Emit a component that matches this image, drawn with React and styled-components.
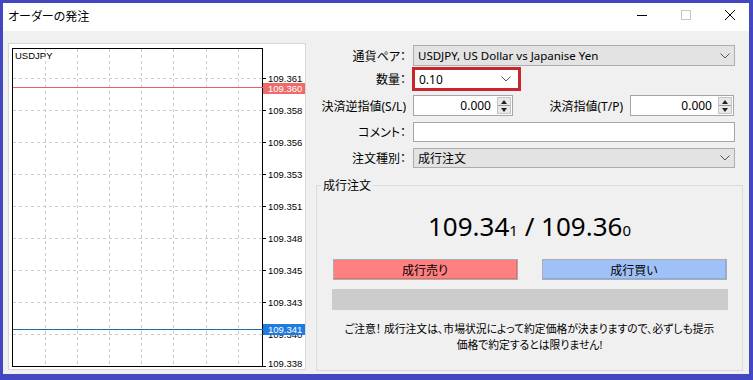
import React from "react";
import styled, { createGlobalStyle } from "styled-components";

const FONT = `"Noto Sans", "Noto Sans CJK JP", sans-serif`;

const GlobalStyle = createGlobalStyle`
  body {
    margin: 0;
    font-family: ${FONT};
    font-size: 12px;
    color: #000;
  }
`;

/* ウィンドウ */
const Window = styled.div`
  width: 753px;
  height: 380px;
  box-sizing: border-box;
  border-style: solid;
  border-color: #4348c2;
  border-width: 3px 4px 6px 3px;
  display: flex;
  flex-direction: column;
  background: #f0f0f0;
  overflow: hidden;
`;

const TitleBar = styled.div`
  height: 28px;
  flex-shrink: 0;
  background: #fff;
  display: flex;
  align-items: center;
  padding-left: 5px;
`;

const Title = styled.div`
  font-size: 12px;
  font-feature-settings: "palt";
  margin-top: -2px;
`;

const Controls = styled.div`
  margin-left: auto;
  margin-right: 14px;
  display: flex;
  align-items: center;
  gap: 34px;
  margin-top: -4px;
`;

const Body = styled.div`
  flex: 1;
  display: flex;
  padding: 12px 0 0 5px;
`;

const ChartPanel = styled.div`
  width: 298px;
  height: 327px;
  flex-shrink: 0;
  box-sizing: border-box;
  background: #fff;
  border: 1px solid #d6d6d6;
`;

const Form = styled.div`
  flex: 1;
  display: flex;
  flex-direction: column;
  padding: 0 6px 0 10px;
  font-feature-settings: "palt";
`;

const FieldRow = styled.div`
  display: grid;
  grid-template-columns: 90px 1fr;
  column-gap: 7px;
  height: ${(p) => p.$h}px;
  margin-top: ${(p) => p.$mt}px;
  margin-right: 8px;
`;

const SpinRow = styled.div`
  display: grid;
  grid-template-columns: 90px 100px 1fr 104px;
  column-gap: 7px;
  height: 21px;
  margin-top: 4px;
  margin-right: 9px;
`;

const Label = styled.div`
  display: flex;
  align-items: center;
  justify-content: flex-end;
  white-space: nowrap;
`;

const Select = styled.div`
  display: flex;
  align-items: center;
  box-sizing: border-box;
  background: #e3e3e3;
  border: 1px solid #adadad;
  padding: 0 4px 0 4px;
  font-size: ${(p) => p.$fs || 12}px;
  svg {
    margin-left: auto;
  }
`;

const QtySelect = styled.div`
  display: flex;
  align-items: center;
  box-sizing: border-box;
  width: 109px;
  margin-left: -1px;
  background: #fff;
  border: 3px solid #c9252d;
  padding: 0 7px 0 4px;
  svg {
    margin-left: auto;
  }
`;

const TextBox = styled.div`
  box-sizing: border-box;
  background: #fff;
  border: 1px solid #a5a5a5;
`;

const SpinBox = styled.div`
  display: flex;
  box-sizing: border-box;
  background: #fff;
  border: 1px solid #a5a5a5;
`;

const SpinValue = styled.div`
  flex: 1;
  display: flex;
  align-items: center;
  justify-content: flex-end;
  padding-right: 6px;
`;

const Spinner = styled.div`
  width: 12px;
  margin: 1px 1px 1px 0;
  display: flex;
  flex-direction: column;
  background: #e8e8e8;
  border: 1px solid #c4c4c4;
`;

const SpinHalf = styled.div`
  flex: 1;
  display: flex;
  align-items: center;
  justify-content: center;
  & + & {
    border-top: 1px solid #9a9a9a;
  }
`;

const GroupBox = styled.div`
  position: relative;
  margin-top: 17px;
  height: 186px;
  box-sizing: border-box;
  border: 1px solid #dcdcdc;
  display: flex;
  flex-direction: column;
  align-items: center;
`;

const Legend = styled.div`
  position: absolute;
  top: -9px;
  left: 4px;
  padding: 0 2px;
  background: #f0f0f0;
  line-height: 17px;
`;

const Price = styled.div`
  margin-top: 25px;
  height: 30px;
  line-height: 30px;
  font-family: "Noto Sans", sans-serif;
  font-size: 26px;
  white-space: pre;
  small {
    font-size: 15px;
  }
`;

const ButtonRow = styled.div`
  margin-top: 18px;
  display: flex;
  gap: 24px;
`;

const OrderButton = styled.div`
  width: 185px;
  height: 21px;
  box-sizing: border-box;
  display: flex;
  align-items: center;
  justify-content: center;
  background: ${(p) => p.$bg};
  border: 1px solid #adadad;
  box-shadow: inset -1px -1px 0 ${(p) => p.$edge};
`;

const ProgressBar = styled.div`
  margin-top: 9px;
  width: 396px;
  height: 21px;
  background: #cccccc;
`;

const Notice = styled.div`
  margin-top: 11px;
  font-size: 10.8px;
  line-height: 16px;
  text-align: center;
  white-space: nowrap;
`;

const Chevron = () => (
  <svg width="10" height="6" viewBox="0 0 10 6">
    <path d="M0.5 0.5 L5 5 L9.5 0.5" fill="none" stroke="#555" strokeWidth="1" />
  </svg>
);

const Tri = ({ up }) => (
  <svg width="6" height="4" viewBox="0 0 6 4">
    <path d={up ? "M0 4 L3 0 L6 4 Z" : "M0 0 L3 4 L6 0 Z"} fill="#222" />
  </svg>
);

const Spin = ({ value }) => (
  <SpinBox>
    <SpinValue>{value}</SpinValue>
    <Spinner>
      <SpinHalf><Tri up /></SpinHalf>
      <SpinHalf><Tri /></SpinHalf>
    </Spinner>
  </SpinBox>
);

const WindowControls = () => (
  <Controls>
    <svg width="10" height="10" viewBox="0 0 10 10">
      <line x1="0" y1="5.5" x2="10" y2="5.5" stroke="#000" strokeWidth="1" />
    </svg>
    <svg width="10" height="10" viewBox="0 0 10 10">
      <rect x="0.5" y="0.5" width="9" height="9" fill="none" stroke="#c6c6c6" strokeWidth="1" />
    </svg>
    <svg width="10" height="10" viewBox="0 0 10 10">
      <path d="M0 0 L10 10 M10 0 L0 10" stroke="#000" strokeWidth="1" />
    </svg>
  </Controls>
);

const gridX = [36, 68, 100, 132, 164, 197, 229];
const prices = [
  "109.361", "109.358", "109.356", "109.353", "109.351",
  "109.348", "109.345", "109.343", "109.340", "109.338",
];

// チャート
const Chart = () => (
  <svg width="296" height="325" viewBox="0 0 296 325" style={{ display: "block" }}>
    <g stroke="#cccccc" strokeWidth="1" strokeDasharray="3 3">
      {gridX.map((x) => (
        <line key={x} x1={x + 0.5} y1="5" x2={x + 0.5} y2="322" />
      ))}
      {prices.slice(0, 9).map((p, i) => (
        <line key={p} x1="4" y1={34.5 + i * 32} x2="253" y2={34.5 + i * 32} />
      ))}
    </g>
    <rect x="3.5" y="4.5" width="250" height="318" fill="none" stroke="#000" strokeWidth="1" />
    <g stroke="#000" strokeWidth="1">
      {prices.map((p, i) => (
        <line key={p} x1="254" y1={34.5 + i * 32} x2="257" y2={34.5 + i * 32} />
      ))}
    </g>
    <g fontFamily='"Liberation Sans", sans-serif' fontSize="9.5" fill="#000">
      <text x="6" y="15">USDJPY</text>
      {prices.map((p, i) => (
        <text key={p} x="259" y={Math.min(38 + i * 32, 323)}>{p}</text>
      ))}
    </g>
    <rect x="4" y="43" width="250" height="1" fill="#e86060" />
    <rect x="254" y="39" width="42" height="11" fill="#ef6a6a" />
    <rect x="4" y="285" width="250" height="1" fill="#1f6aa8" />
    <rect x="254" y="280" width="42" height="11" fill="#1f7be0" />
    <g fontFamily='"Liberation Sans", sans-serif' fontSize="9.5" fill="#fff">
      <text x="259" y="47.5">109.360</text>
      <text x="259" y="288.5">109.341</text>
    </g>
  </svg>
);

const App = function App() {
  return <>
    <GlobalStyle />
    <Window>
      <TitleBar>
        <Title>オーダーの発注</Title>
        <WindowControls />
      </TitleBar>
      <Body>
        <ChartPanel>
          <Chart />
        </ChartPanel>
        <Form>
          <FieldRow $h={21} $mt={2}>
            <Label>通貨ペア：</Label>
            <Select $fs={11.5}>USDJPY, US Dollar vs Japanise Yen<Chevron /></Select>
          </FieldRow>
          <FieldRow $h={24} $mt={1}>
            <Label>数量：</Label>
            <QtySelect>0.10<Chevron /></QtySelect>
          </FieldRow>
          <SpinRow>
            <Label>決済逆指値(S/L)</Label>
            <Spin value="0.000" />
            <Label>決済指値(T/P)</Label>
            <Spin value="0.000" />
          </SpinRow>
          <FieldRow $h={20} $mt={6}>
            <Label>コメント：</Label>
            <TextBox />
          </FieldRow>
          <FieldRow $h={20} $mt={6}>
            <Label>注文種別：</Label>
            <Select>成行注文<Chevron /></Select>
          </FieldRow>
          <GroupBox>
            <Legend>成行注文</Legend>
            <Price>109.34<small>1</small> / 109.36<small>0</small></Price>
            <ButtonRow>
              <OrderButton $bg="#ff8080" $edge="#e66a6a">成行売り</OrderButton>
              <OrderButton $bg="#a0c0f8" $edge="#8aaae6">成行買い</OrderButton>
            </ButtonRow>
            <ProgressBar />
            <Notice>
              ご注意！ 成行注文は、市場状況によって約定価格が決まりますので、必ずしも提示<br />
              価格で約定するとは限りません!
            </Notice>
          </GroupBox>
        </Form>
      </Body>
    </Window>
  </>;
};

export default App;
